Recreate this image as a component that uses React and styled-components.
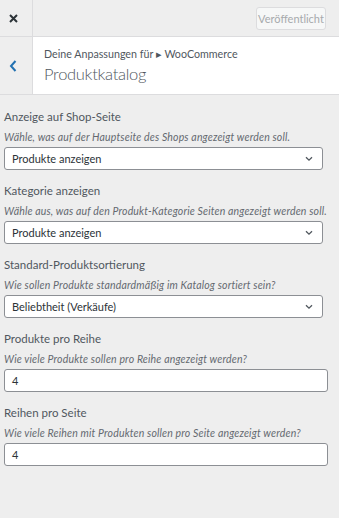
import styled, { createGlobalStyle } from "styled-components";

const GlobalStyle = createGlobalStyle`
  html, body {
    margin: 0;
    padding: 0;
    background: #eeeeee;
  }
  * {
    box-sizing: border-box;
  }
`;

const Page = styled.div`
  width: 339px;
  min-height: 518px;
  background: #eeeeee;
  font-family: Lato, "Open Sans", sans-serif;
  color: #555d66;
`;

const TopBar = styled.div`
  display: flex;
  align-items: center;
  height: 37px;
  border-bottom: 1px solid #dcdcde;
`;

const CloseButton = styled.div`
  width: 33px;
  height: 100%;
  display: flex;
  align-items: center;
  padding-left: 9px;
  border-right: 1px solid #dcdcde;
`;

const PublishButton = styled.div`
  margin-left: auto;
  margin-right: 13px;
  width: 70px;
  height: 23px;
  display: flex;
  align-items: center;
  justify-content: center;
  border: 1px solid #dcdcde;
  border-radius: 3px;
  background: #f6f7f7;
  color: #a7aaad;
  font-size: 11px;
`;

const SectionHeader = styled.div`
  display: flex;
  height: 58px;
  border-bottom: 1px solid #dcdcde;
`;

const BackButton = styled.div`
  width: 32px;
  display: flex;
  align-items: center;
  padding-left: 9px;
`;

const TitleBox = styled.div`
  flex: 1;
  background: #fff;
  border-left: 1px solid #dcdcde;
  padding: 9px 0 0 11px;
`;

const Breadcrumb = styled.div`
  font-size: 10.7px;
  line-height: 15px;
  color: #50575e;
`;

const Title = styled.div`
  font-size: 16.5px;
  font-weight: 300;
  letter-spacing: -0.3px;
  line-height: 24px;
  color: #50575e;
  margin-top: 1px;
`;

const Controls = styled.div`
  padding: 13px 0 0 4px;
`;

const Group = styled.div`
  margin-bottom: 12px;
  padding-right: ${(p) => (p.$wide ? "11px" : "16px")};
`;

const Label = styled.div`
  font-size: 11.5px;
  line-height: 18px;
  color: #50575e;
`;

const Description = styled.div`
  font-size: 10.5px;
  letter-spacing: 0.16px;
  line-height: 14px;
  font-style: italic;
  color: #646970;
  margin-top: 4px;
  margin-bottom: 3px;
  white-space: nowrap;
`;

const Field = styled.div`
  position: relative;
  height: 23px;
  display: flex;
  align-items: center;
  padding-left: 7px;
  background: #fff;
  border: 1px solid #8c8f94;
  border-radius: 3px;
  font-size: 11px;
  color: #2c3338;
`;

const Caret = styled.svg`
  position: absolute;
  right: 9px;
  top: 8px;
`;

const Chevron = () => (
  <Caret width="8" height="6" viewBox="0 0 8 6">
    <path d="M1 1.2 L4 4.2 L7 1.2" fill="none" stroke="#50575e" strokeWidth="1.3" />
  </Caret>
);

const groups = [
  {
    label: "Anzeige auf Shop-Seite",
    desc: "Wähle, was auf der Hauptseite des Shops angezeigt werden soll.",
    value: "Produkte anzeigen",
    select: true,
  },
  {
    label: "Kategorie anzeigen",
    desc: "Wähle aus, was auf den Produkt-Kategorie Seiten angezeigt werden soll.",
    value: "Produkte anzeigen",
    select: true,
  },
  {
    label: "Standard-Produktsortierung",
    desc: "Wie sollen Produkte standardmäßig im Katalog sortiert sein?",
    value: "Beliebtheit (Verkäufe)",
    select: true,
  },
  {
    label: "Produkte pro Reihe",
    desc: "Wie viele Produkte sollen pro Reihe angezeigt werden?",
    value: "4",
  },
  {
    label: "Reihen pro Seite",
    desc: "Wie viele Reihen mit Produkten sollen pro Seite angezeigt werden?",
    value: "4",
  },
];

export default function App() {
  return (
    <Page>
      <GlobalStyle />
      <TopBar>
        <CloseButton>
          <svg width="9" height="9" viewBox="0 0 9 9">
            <path d="M1 1 L8 8 M8 1 L1 8" stroke="#2c3338" strokeWidth="2" />
          </svg>
        </CloseButton>
        <PublishButton>Veröffentlicht</PublishButton>
      </TopBar>
      <SectionHeader>
        <BackButton>
          <svg width="8" height="12" viewBox="0 0 8 12">
            <path d="M6.5 1 L2 6 L6.5 11" fill="none" stroke="#2271b1" strokeWidth="2" />
          </svg>
        </BackButton>
        <TitleBox>
          <Breadcrumb>Deine Anpassungen für ▸ WooCommerce</Breadcrumb>
          <Title>Produktkatalog</Title>
        </TitleBox>
      </SectionHeader>
      <Controls>
        {groups.map((g) => (
          <Group key={g.label} $wide={!g.select}>
            <Label>{g.label}</Label>
            <Description>{g.desc}</Description>
            <Field>
              {g.value}
              {g.select && <Chevron />}
            </Field>
          </Group>
        ))}
      </Controls>
    </Page>
  );
}
